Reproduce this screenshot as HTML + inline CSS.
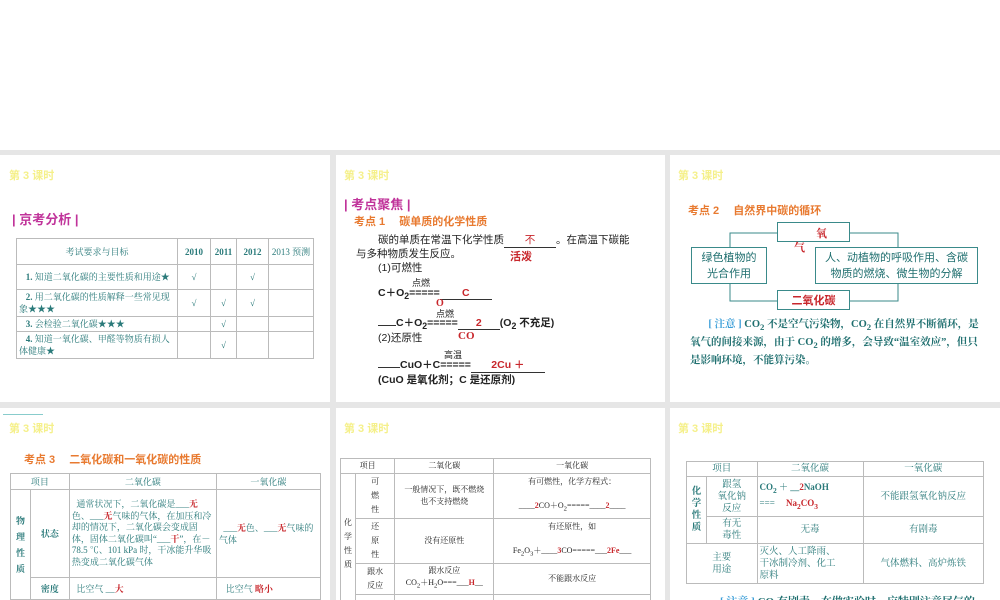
<!DOCTYPE html>
<html><head><meta charset="utf-8"><style>
*{margin:0;padding:0;box-sizing:border-box}
body{width:1000px;height:600px;background:#e6e6e6;position:relative;overflow:hidden;font-family:"Liberation Serif","Noto Serif CJK SC",serif;color:#1f6f6f}
.p{position:absolute;background:#fff;overflow:hidden}
.a{position:absolute;white-space:nowrap}
.y{color:#f5f08a;font-family:"Liberation Sans","Noto Sans CJK SC",sans-serif;font-size:11px;font-weight:bold}
.m{color:#c0339a;font-family:"Liberation Sans","Noto Sans CJK SC",sans-serif;font-size:13px;font-weight:bold}
.o{color:#e87a30;font-family:"Liberation Sans","Noto Sans CJK SC",sans-serif;font-size:11px;font-weight:bold}
.r{color:#c8272c;font-weight:bold}
.k{color:#222;font-family:"Liberation Sans","Noto Sans CJK SC",sans-serif;font-size:10.5px}
table{position:absolute;border-collapse:collapse;font-size:9px;color:#2a7a7a}
td{border:1px solid #bbb;text-align:center;padding:1px 2px;line-height:12px}
.u{display:inline-block;border-bottom:1px solid #333;text-align:center}
</style></head><body>
<div class="p" style="left:0;top:0;width:1000px;height:150px"></div>

<!-- panel 1 -->
<div class="p" style="left:0;top:155px;width:330px;height:247px">
<div class="a y" style="left:9px;top:12px">第 3 课时</div>
<div class="a m" style="left:12px;top:54px">| 京考分析 |</div>
<table style="left:16px;top:83px;width:298px">
<tr style="height:26px"><td style="width:161px">考试要求与目标</td><td style="width:33px"><b>2010</b></td><td style="width:26px"><b>2011</b></td><td style="width:32px"><b>2012</b></td><td>2013 预测</td></tr>
<tr style="height:25px"><td style="text-align:left">&nbsp;&nbsp;&nbsp;<b>1.</b> 知道二氧化碳的主要性质和用途★</td><td>√</td><td></td><td>√</td><td></td></tr>
<tr style="height:25px"><td style="text-align:left">&nbsp;&nbsp;&nbsp;<b>2.</b> 用二氧化碳的性质解释一些常见现象★★★</td><td>√</td><td>√</td><td>√</td><td></td></tr>
<tr style="height:14px"><td style="text-align:left">&nbsp;&nbsp;&nbsp;<b>3.</b> 会检验二氧化碳★★★</td><td></td><td>√</td><td></td><td></td></tr>
<tr style="height:25px"><td style="text-align:left">&nbsp;&nbsp;&nbsp;<b>4.</b> 知道一氧化碳、甲醛等物质有损人体健康★</td><td></td><td>√</td><td></td><td></td></tr>
</table>
</div>

<!-- panel 2 -->
<div class="p" style="left:336px;top:155px;width:329px;height:247px">
<div class="a y" style="left:8px;top:12px">第 3 课时</div>
<div class="a m" style="left:8px;top:39px">| 考点聚焦 |</div>
<div class="a o" style="left:18px;top:58px">考点 1　 碳单质的化学性质</div>
<div class="a k" style="left:42px;top:77px">碳的单质在常温下化学性质<span class="u r" style="width:52px;font-weight:normal">不</span>。在高温下碳能</div>
<div class="a k" style="left:20px;top:91px">与多种物质发生反应。</div>
<div class="a r" style="left:174px;top:93px;font-size:11px;font-family:'Liberation Sans','Noto Sans CJK SC',sans-serif">活泼</div>
<div class="a k" style="left:42px;top:105px">(1)可燃性</div>
<div class="a k" style="left:42px;top:130px;font-weight:bold">C＋O<sub>2</sub>=====<span class="u r" style="width:52px">C</span></div>
<div class="a k" style="left:76px;top:121px;font-size:9px">点燃</div>
<div class="a r" style="left:100px;top:143px;font-size:10px">O</div>
<div class="a k" style="left:100px;top:152px;font-size:9px">点燃</div>
<div class="a k" style="left:42px;top:160px;font-weight:bold"><span class="u" style="width:18px"></span>C＋O<sub>2</sub>=====<span class="u r" style="width:42px">2</span>(O<sub>2</sub> 不充足)</div>
<div class="a k" style="left:42px;top:175px">(2)还原性</div>
<div class="a r" style="left:122px;top:175px;font-size:11px">CO</div>
<div class="a k" style="left:108px;top:193px;font-size:9px">高温</div>
<div class="a k" style="left:42px;top:202px;font-weight:bold"><span class="u" style="width:22px"></span>CuO＋C=====<span class="u r" style="width:74px">2Cu ＋</span></div>
<div class="a k" style="left:42px;top:217px;font-weight:bold">(CuO 是氧化剂；C 是还原剂)</div>
</div>

<!-- panel 3 -->
<div class="p" style="left:670px;top:155px;width:330px;height:247px">
<div class="a y" style="left:8px;top:12px">第 3 课时</div>
<div class="a o" style="left:18px;top:47px">考点 2　 自然界中碳的循环</div>
<svg class="a" style="left:0;top:0" width="330" height="247"><g stroke="#3a8a8a" fill="none"><path d="M60 92V78H107M180 78H228V92M228 128V146H180M107 146H60V128"/></g></svg>
<div class="a" style="left:107px;top:67px;width:73px;height:20px;border:1px solid #3a8a8a;background:#fff"></div>
<div class="a r" style="left:146px;top:70px;font-size:11px">氧</div>
<div class="a r" style="left:124px;top:84px;font-size:11px">气</div>
<div class="a" style="left:21px;top:92px;width:76px;height:37px;border:1px solid #3a8a8a;text-align:center;font-size:11px;line-height:16px;padding-top:2px;color:#1f6f6f;white-space:normal;font-family:'Liberation Sans','Noto Sans CJK SC',sans-serif;background:#fff">绿色植物的<br>光合作用</div>
<div class="a" style="left:145px;top:92px;width:163px;height:37px;border:1px solid #3a8a8a;text-align:center;font-size:11px;line-height:16px;padding-top:2px;color:#1f6f6f;white-space:normal;font-family:'Liberation Sans','Noto Sans CJK SC',sans-serif;background:#fff">人、动植物的呼吸作用、含碳<br>物质的燃烧、微生物的分解</div>
<div class="a" style="left:107px;top:135px;width:73px;height:20px;border:1px solid #3a8a8a;text-align:center;background:#fff"><span class="r" style="font-size:11px;line-height:18px;font-family:'Liberation Sans','Noto Sans CJK SC',sans-serif">二氧化碳</span></div>
<div class="a" style="left:20px;top:162px;font-size:10.5px;line-height:16px;width:295px;white-space:normal;font-weight:bold;color:#1f6f6f">&nbsp;&nbsp;&nbsp;&nbsp;&nbsp;&nbsp;&nbsp;<span style="color:#3b9ed8">[ 注意 ]</span> CO<sub>2</sub> 不是空气污染物，CO<sub>2</sub> 在自然界不断循环，是氧气的间接来源，由于 CO<sub>2</sub> 的增多，会导致“温室效应”，但只是影响环境，不能算污染。</div>
</div>

<!-- panel 4 -->
<div class="p" style="left:0;top:408px;width:330px;height:192px">
<div class="a" style="left:3px;top:6px;width:40px;border-top:1px solid #8cc"></div>
<div class="a y" style="left:9px;top:12px">第 3 课时</div>
<div class="a o" style="left:24px;top:43px">考点 3　 二氧化碳和一氧化碳的性质</div>
<table style="left:10px;top:65px;width:311px">
<tr style="height:16px"><td colspan="2" style="width:63px">项目</td><td style="width:147px">二氧化碳</td><td>一氧化碳</td></tr>
<tr style="height:88px"><td rowspan="2" style="width:20px;font-weight:bold;line-height:16px">物<br>理<br>性<br>质</td><td style="font-weight:bold">状态</td><td style="text-align:left;font-size:9px;line-height:11.5px">&nbsp;&nbsp;通常状况下，二氧化碳是___<span class="r">无</span>色、___<span class="r">无</span>气味的气体，在加压和冷却的情况下，二氧化碳会变成固体，固体二氧化碳叫“___<span class="r">干</span>”，在－78.5 ℃、101 kPa 时，干冰能升华吸热变成二氧化碳气体</td><td style="text-align:left">&nbsp;&nbsp;___<span class="r">无</span>色、___<span class="r">无</span>气味的气体</td></tr>
<tr style="height:22px"><td style="font-weight:bold">密度</td><td style="text-align:left">&nbsp;&nbsp;比空气 __<span class="r">大</span></td><td style="text-align:left">&nbsp;&nbsp;&nbsp;比空气 <span class="r">略小</span></td></tr>
</table>
</div>

<!-- panel 5 -->
<div class="p" style="left:336px;top:408px;width:329px;height:192px">
<div class="a y" style="left:8px;top:12px">第 3 课时</div>
<table style="left:4px;top:50px;width:311px;color:#222;font-size:8px">
<tr style="height:15px"><td colspan="2" style="width:46px">项目</td><td style="width:99px">二氧化碳</td><td>一氧化碳</td></tr>
<tr style="height:43px"><td rowspan="4" style="width:15px;line-height:14px">化<br>学<br>性<br>质</td><td style="line-height:14px">可<br>燃<br>性</td><td>一般情况下，既不燃烧<br>也不支持燃烧</td><td>有可燃性，化学方程式：<br><br>____<span class="r">2</span>CO＋O<sub>2</sub>=====____<span class="r">2</span>____</td></tr>
<tr style="height:43px"><td style="line-height:14px">还<br>原<br>性</td><td>没有还原性</td><td>有还原性，如<br><br>Fe<sub>2</sub>O<sub>3</sub>＋____<span class="r">3</span>CO=====___<span class="r">2Fe</span>___</td></tr>
<tr style="height:29px"><td style="line-height:14px">跟水<br>反应</td><td>跟水反应<br>CO<sub>2</sub>＋H<sub>2</sub>O===___<span class="r">H</span>__</td><td>不能跟水反应</td></tr>
<tr style="height:20px"><td>跟石</td><td>跟石灰水反应</td><td></td></tr>
</table>
</div>

<!-- panel 6 -->
<div class="p" style="left:670px;top:408px;width:330px;height:192px">
<div class="a y" style="left:8px;top:12px">第 3 课时</div>
<table style="left:16px;top:53px;width:298px;font-size:9.5px">
<tr style="height:15px"><td colspan="2" style="width:58px">项目</td><td style="width:106px">二氧化碳</td><td>一氧化碳</td></tr>
<tr style="height:40px"><td rowspan="2" style="width:20px;font-weight:bold;line-height:12px">化<br>学<br>性<br>质</td><td>跟氢<br>氧化钠<br>反应</td><td style="text-align:left;font-size:9px"><b>CO<sub>2</sub> ＋ __<span class="r">2</span>NaOH</b><br>===<span class="r">&nbsp;&nbsp;&nbsp;&nbsp;&nbsp;Na<sub>2</sub>CO<sub>3</sub></span></td><td>不能跟氢氧化钠反应</td></tr>
<tr style="height:27px"><td>有无<br>毒性</td><td>无毒</td><td>有剧毒</td></tr>
<tr style="height:40px"><td colspan="2">主要<br>用途</td><td style="text-align:left">灭火、人工降雨、<br>干冰制冷剂、化工<br>原料</td><td>气体燃料、高炉炼铁</td></tr>
</table>
<div class="a" style="left:50px;top:185px;font-size:11px;font-weight:bold"><span style="color:#3b9ed8">[ 注意 ]</span> CO 有剧毒，在做实验时，应特别注意尾气的</div>
</div>
</body></html>
